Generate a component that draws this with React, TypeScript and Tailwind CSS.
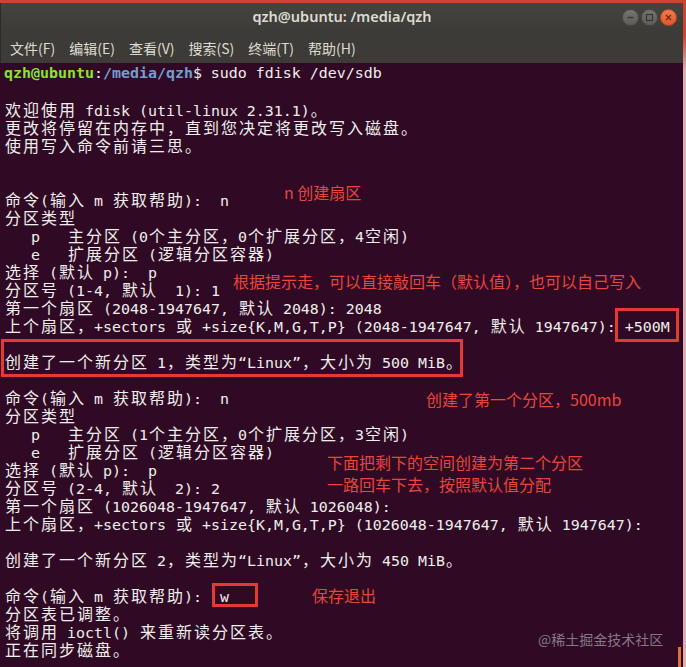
import React from "react";

type Seg = { t: string; c?: string; b?: boolean };
type Row = string | Seg[];

const WIDE = /[\u2E80-\u9FFF\u3000-\u303F\uFF00-\uFFEF]/;

const GREEN = "#5b9a1c";

const rows: Row[] = [
  [
    { t: "qzh@ubuntu", c: "text-[#8ae234]", b: true },
    { t: ":" },
    { t: "/media/qzh", c: "text-[#729fcf]", b: true },
    { t: "$ sudo fdisk /dev/sdb" },
  ],
  "",
  [{ t: "欢迎使用 fdisk (util-linux 2.31.1)。", c: `text-[${GREEN}]` }],
  "更改将停留在内存中，直到您决定将更改写入磁盘。",
  "使用写入命令前请三思。",
  "",
  "",
  "命令(输入 m 获取帮助):  n",
  "分区类型",
  "   p   主分区 (0个主分区，0个扩展分区，4空闲)",
  "   e   扩展分区 (逻辑分区容器)",
  "选择 (默认 p):  p",
  "分区号 (1-4, 默认  1): 1",
  "第一个扇区 (2048-1947647, 默认 2048): 2048",
  "上个扇区，+sectors 或 +size{K,M,G,T,P} (2048-1947647, 默认 1947647): +500M",
  "",
  "创建了一个新分区 1，类型为“Linux”，大小为 500 MiB。",
  "",
  "命令(输入 m 获取帮助):  n",
  "分区类型",
  "   p   主分区 (1个主分区，0个扩展分区，3空闲)",
  "   e   扩展分区 (逻辑分区容器)",
  "选择 (默认 p):  p",
  "分区号 (2-4, 默认  2): 2",
  "第一个扇区 (1026048-1947647, 默认 1026048):",
  "上个扇区，+sectors 或 +size{K,M,G,T,P} (1026048-1947647, 默认 1947647):",
  "",
  "创建了一个新分区 2，类型为“Linux”，大小为 450 MiB。",
  "",
  "命令(输入 m 获取帮助):  w",
  "分区表已调整。",
  "将调用 ioctl() 来重新读分区表。",
  "正在同步磁盘。",
];

// terminal cells: ascii = 9px, CJK = 18px
function cells(text: string, key: string) {
  const out: React.ReactNode[] = [];
  let buf = "";
  let i = 0;
  const flush = () => {
    if (buf) {
      out.push(
        <span key={`${key}-n${i++}`} className="text-[14.95px]">
          {buf}
        </span>
      );
      buf = "";
    }
  };
  for (const ch of text) {
    if (WIDE.test(ch)) {
      flush();
      out.push(
        <span
          key={`${key}-w${i++}`}
          className="inline-block w-[18px] text-center font-['Noto_Sans_CJK_SC',sans-serif] text-[16px] font-normal"
        >
          {ch}
        </span>
      );
    } else buf += ch;
  }
  flush();
  return out;
}

function TermLine({ row, idx }: { row: Row; idx: number }) {
  const segs: Seg[] = typeof row === "string" ? [{ t: row }] : row;
  return (
    <div className="h-[18px] whitespace-pre leading-[18px]">
      {segs.map((s, j) => (
        <span key={j} className={`${s.c ?? ""} ${s.b ? "font-bold" : ""}`}>
          {cells(s.t, `${idx}-${j}`)}
        </span>
      ))}
    </div>
  );
}

function WinButton({ kind }: { kind: "min" | "max" | "close" }) {
  const close = kind === "close";
  return (
    <div
      className={`flex size-[17px] items-center justify-center rounded-full border ${
        close
          ? "border-[#b8471f] bg-[linear-gradient(180deg,#f07b4e,#e2552a)]"
          : "border-[#4b4a46] bg-[linear-gradient(180deg,#75746f,#5d5c58)]"
      }`}
    >
      <svg width="9" height="9" viewBox="0 0 9 9" fill="none">
        {kind === "min" && <path d="M1.5 4.5h6" stroke="#34332f" strokeWidth="1.3" />}
        {kind === "max" && <rect x="1.5" y="1.5" width="6" height="6" stroke="#34332f" strokeWidth="1.1" />}
        {close && <path d="M2 2l5 5M7 2l-5 5" stroke="#7d2a0c" strokeWidth="1.4" />}
      </svg>
    </div>
  );
}

const menu = ["文件(F)", "编辑(E)", "查看(V)", "搜索(S)", "终端(T)", "帮助(H)"];

const notes = [
  { t: "n 创建扇区", cls: "left-[284px] top-[183px]" },
  { t: "根据提示走，可以直接敲回车（默认值），也可以自己写入", cls: "left-[233px] top-[272px]" },
  { t: "创建了第一个分区，500mb", cls: "left-[426px] top-[390px]" },
  { t: "下面把剩下的空间创建为第二个分区", cls: "left-[327px] top-[453px]" },
  { t: "一路回车下去，按照默认值分配", cls: "left-[327px] top-[475px]" },
  { t: "保存退出", cls: "left-[312px] top-[586px]" },
];

export default function App() {
  return (
    <div className="relative flex h-[667px] w-[686px] overflow-hidden bg-[linear-gradient(180deg,#c8472f_0px,#c8472f_36px,#dcaeb2_70px,#dcaeb2_100%)]">
      <div className="mt-[3px] flex w-[683px] flex-col">
        {/* title bar */}
        <div className="grid h-[28px] grid-cols-[1fr_auto_1fr] items-center border-l border-[#2c2b28] bg-[linear-gradient(180deg,#45443f,#3c3b37)] font-['Noto_Sans',sans-serif]">
          <div />
          <div className="text-[14.5px] font-semibold text-[#dfdbd2]">qzh@ubuntu: /media/qzh</div>
          <div className="flex justify-end gap-[2px] pr-[6px]">
            <WinButton kind="min" />
            <WinButton kind="max" />
            <WinButton kind="close" />
          </div>
        </div>

        {/* menu bar */}
        <div className="flex h-[32px] items-center gap-[14px] border-l border-[#2c2b28] bg-[#3c3b37] pl-[9px] pt-[3px] font-['Noto_Sans_CJK_SC',sans-serif] text-[14px] text-[#dfdbd2]">
          {menu.map((m) => (
            <span key={m}>{m}</span>
          ))}
        </div>

        {/* terminal */}
        <div className="relative flex-1 bg-[#300a24] pl-[4px] pt-px font-['DejaVu_Sans_Mono',monospace] text-[#eeeeec]">
          {rows.map((r, i) => (
            <TermLine key={i} row={r} idx={i} />
          ))}
          <div className="absolute bottom-0 right-[2px] h-[20px] w-[3px] bg-[#e0703a]" />
        </div>
      </div>

      {/* annotations */}
      {notes.map((n) => (
        <div
          key={n.t}
          className={`absolute ${n.cls} whitespace-nowrap font-['Noto_Sans_CJK_SC',sans-serif] text-[16px] leading-[18px] text-[#e8453c]`}
        >
          {n.t}
        </div>
      ))}
      <div className="absolute left-[615px] top-[308px] h-[34px] w-[64px] border-[3px] border-[#e53935]" />
      <div className="absolute left-px top-[339px] h-[38px] w-[462px] border-[3px] border-[#e53935]" />
      <div className="absolute left-[212px] top-[583px] h-[24px] w-[46px] border-[3px] border-[#e53935]" />

      <div className="absolute left-[538px] top-[630px] font-['Noto_Sans_CJK_SC',sans-serif] text-[14px] leading-[18px] text-[#857785]">
        @稀土掘金技术社区
      </div>
    </div>
  );
}
